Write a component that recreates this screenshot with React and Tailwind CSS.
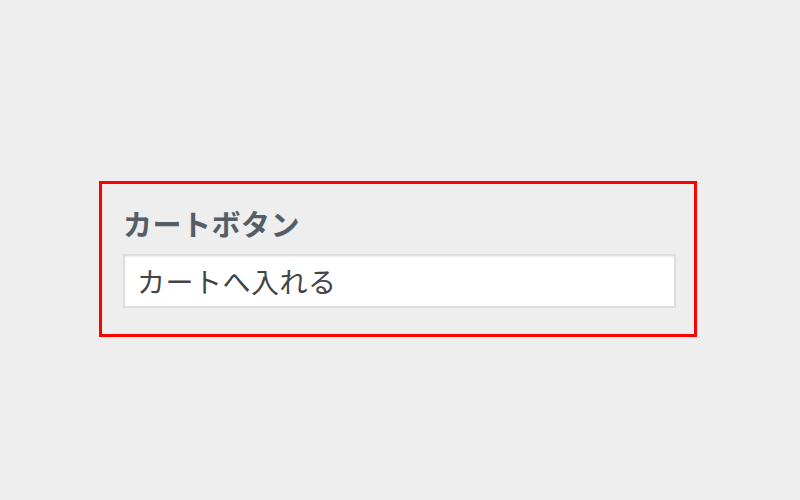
export default function App() {
  return (
    <div
      className="min-h-[500px] w-[800px] bg-[#eeeeee] pl-[99px] pt-[181px]"
      style={{ fontFamily: '"Noto Sans CJK JP", "Noto Sans", sans-serif' }}
    >
      <div className="h-[156px] w-[598px] border-[3px] border-[#ff0000] pl-[21px] pr-[18px] pt-[18px]">
        <div className="text-[29px] font-bold leading-[42px] tracking-[0.5px] text-[#555d66]">カートボタン</div>
        <div className="mt-[10px] flex h-[54px] items-center border-2 border-[#dddddd] bg-white pl-[12px] shadow-[inset_0_1px_2px_rgba(0,0,0,0.07)]">
          <span className="text-[28px] leading-none tracking-[0.5px] text-[#444444]">カートへ入れる</span>
        </div>
      </div>
    </div>
  );
}
